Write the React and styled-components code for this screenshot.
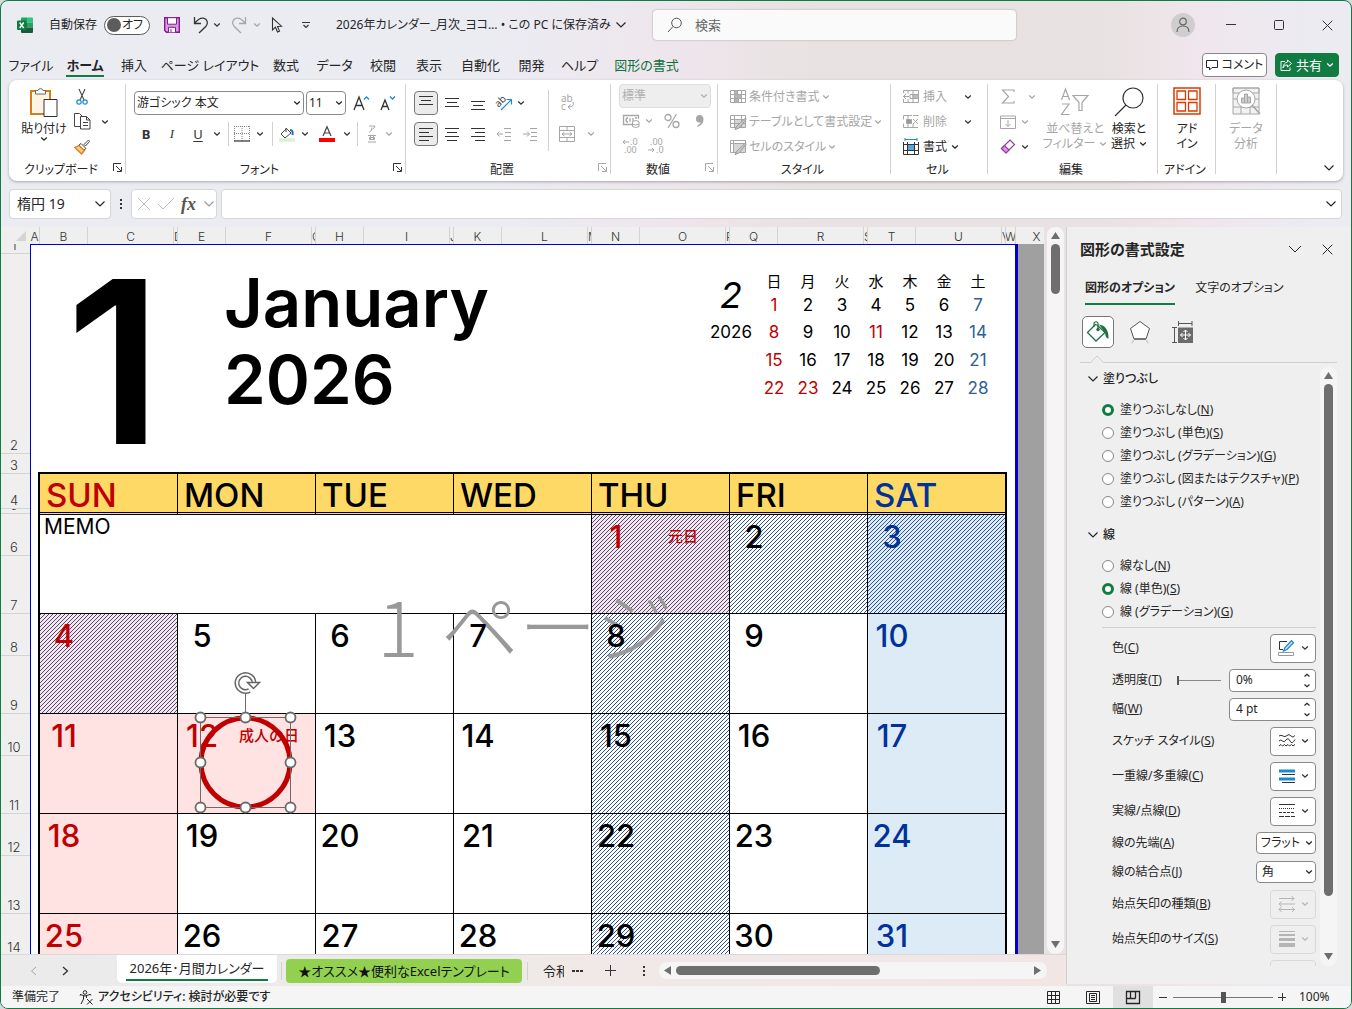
import React from "react";
import styled, { createGlobalStyle, css } from "styled-components";

const GlobalStyle = createGlobalStyle`
  * { box-sizing: border-box; }

  body {
    margin: 0;
    background: #d8d8dc;
    color: #262626;
    font-family: "Noto Sans", "Noto Sans CJK JP", sans-serif;
    font-size: 12px;
    line-height: 16px;
    font-feature-settings: "palt";
  }

  button, input, select {
    font: inherit;
    font-feature-settings: inherit;
    color: inherit;
    margin: 0;
  }

  button {
    border: 0;
    padding: 0;
    background: none;
  }
`;

/* ---------- icons ---------- */

const Svg = styled.svg`
  display: block;
  flex: none;
  overflow: visible;
`;

function Icon({ w = 16, h = 16, children, stroke = "currentColor" }) {
  return (
    <Svg width={w} height={h} viewBox={`0 0 ${w} ${h}`} fill="none" stroke={stroke} aria-hidden="true">
      {children}
    </Svg>
  );
}

const Chevron = () => <Icon w={8} h={6}><path d="M1.2 1.5L4 4.2l2.800-2.700" strokeWidth="1.300" /></Icon>;
const BigChevron = () => <Icon w={14} h={8}><path d="M1 1l6 6 6-6" /></Icon>;
const MidChevron = ({ stroke }) => <Icon w={12} h={8} stroke={stroke}><path d="M1.500 1.500L6 6l4.500-4.500" strokeWidth="1.200" /></Icon>;
const Launcher = () => (
  <Icon w={9} h={9}><path d="M.5 8V.5H8M3 3l5 5M8.500 4v4.500H4" /></Icon>
);

const ExcelLogo = () => (
  <Icon w={16} h={16} stroke="none">
    <path d="M4 1.500Q4 .5 5 .5h5v5H4z" fill="#21a366" />
    <path d="M10 .5h5q1 0 1 1v4h-6z" fill="#33c481" />
    <path d="M4 5.500h6v5H4z" fill="#107c41" />
    <path d="M10 5.500h6v5h-6z" fill="#21a366" />
    <path d="M4 10.500h12V15q0 1-1 1H5q-1 0-1-1z" fill="#185c37" />
    <rect x="0" y="3.500" width="9.500" height="9.500" rx="1" fill="#107c41" />
    <path d="M2.700 5.500l4 5.500M6.700 5.500l-4 5.500" stroke="#fff" strokeWidth="1.400" />
  </Icon>
);
const SaveIcon = () => (
  <Icon w={16} h={16} stroke="#881798">
    <path d="M.7.7h14.600v14.600H2.500L.7 13.500z" fill="#d59ddb" strokeWidth="1.400" />
    <path d="M3.500.7h9v6.500h-9z" fill="#fff" />
    <path d="M4.500 15.300v-5h7v5" fill="#fff" />
    <path d="M7 12v3" />
  </Icon>
);
const UndoIcon = () => (
  <Icon w={16} h={18}><path d="M1.500 1v6.500h6.500M1.500 7.500C5 3 8 1.800 10.500 2.200c4 .8 5 5 2.500 8L6 17" strokeWidth="1.300" /></Icon>
);
const RedoIcon = () => (
  <Icon w={16} h={18}><path d="M14.500 1v6.500H8M14.500 7.500C11 3 8 1.800 5.500 2.200c-4 .8-5 5-2.500 8L10 17" strokeWidth="1.300" /></Icon>
);
const CursorIcon = () => (
  <Icon w={12} h={16}><path d="M1.500 1v12l3-2.800 2 4.800 2-.9-2-4.600 4-.3z" strokeWidth="1.100" /></Icon>
);
const MoreIcon = () => <Icon w={8} h={8}><path d="M0 1.500h8M1.500 4L4 6.500 6.500 4" strokeWidth="1.200" /></Icon>;
const SearchIcon = () => <Icon w={16} h={16}><circle cx="9.500" cy="6" r="4.800" /><path d="M6 9.500L1 15" /></Icon>;
const PersonIcon = () => (
  <Icon w={14} h={16}><circle cx="7" cy="4.500" r="3.300" strokeWidth="1.200" /><path d="M1 15c0-4 2.500-6 6-6s6 2 6 6" strokeWidth="1.200" /></Icon>
);
const CommentIcon = () => <Icon w={12} h={12}><path d="M.5 1.500h11v7H6L3.500 11V8.500h-3z" /></Icon>;
const ShareIcon = () => (
  <Icon w={12} h={12}><path d="M5 2.500H1v9h9V8.500M7.500 1l4 3.500-4 3.500V6C5 6 4 7 3 8.800 3.300 5.500 5 3.500 7.500 3z" /></Icon>
);
const PasteIcon = () => (
  <Icon w={28} h={30}>
    <path d="M1 4h19v23H1z" fill="#fff" stroke="#e07b14" strokeWidth="2" />
    <path d="M3 6h15v19H3z" fill="#fdf3e0" stroke="none" />
    <path d="M5.500 7V3.500H8a2.600 2.600 0 015 0h2.500V7z" fill="#fff" stroke="#666" />
    <path d="M14 12.500h13v17H14z" fill="#fff" stroke="#333" />
  </Icon>
);
const CutIcon = () => (
  <Icon w={12} h={16}>
    <path d="M3 0l5 11M9 0L4 11" stroke="#444" strokeWidth="1.100" />
    <circle cx="3" cy="13" r="2.200" stroke="#1b8ad0" strokeWidth="1.200" />
    <circle cx="9" cy="13" r="2.200" stroke="#1b8ad0" strokeWidth="1.200" />
  </Icon>
);
const CopyIcon = () => (
  <Icon w={17} h={17}>
    <path d="M6 13.500H.5v-13H5.500L8 3" stroke="#444" />
    <path d="M6.500 3.500h6l3.500 3.500v9H6.500zM12.500 3.500V7H16M9 9.500h5M9 12.500h5" stroke="#444" />
  </Icon>
);
const BrushIcon = () => (
  <Icon w={16} h={16}>
    <path d="M14.500 1L10 5.500l1.500 1.500L15.500 2.500zM7 4.500l5 5-2 1.500-5-5z" stroke="#444" fill="#fff" />
    <path d="M5 6.500L.8 8.500 7.500 15l3-3.500z" fill="#f8c98a" stroke="#e07b14" strokeWidth="1.300" />
  </Icon>
);
const GrowFont = ({ down }) => (
  <Icon w={16} h={16}>
    <path d={down ? "M1 15L5 5l4 10M2.500 11.500h5" : "M1 15L6 2l5 13M2.500 10.500h7"} strokeWidth="1.300" />
    <path d={down ? "M10 1.500l2.500 2.500L15 1.500" : "M11 4.500L13.500 2 16 4.500"} stroke="#1b8ad0" strokeWidth="1.300" />
  </Icon>
);
const BorderIcon = () => (
  <Icon w={16} h={16}>
    <path d="M.5 0v15M8 0v15M15.500 0v15M0 .5h16M0 7.500h16" stroke="#888" strokeDasharray="1 1" />
    <path d="M0 15h16" stroke="#555" strokeWidth="1.300" />
  </Icon>
);
const FillIcon = () => (
  <Icon w={16} h={16}>
    <path d="M7 3L2 8l4 4 6-5-5-5V6" stroke="#444" />
    <path d="M11 4c2.500 0 3 2 2.500 5" stroke="#1b6fb5" strokeWidth="2" />
    <path d="M0 14h16" stroke="#dfeed6" strokeWidth="3.500" />
  </Icon>
);
const FontColorIcon = () => (
  <Icon w={16} h={16}>
    <path d="M4 10L8 .8l4 9.200M5.300 7h5.400" stroke="#444" strokeWidth="1.200" />
    <path d="M0 14h16" stroke="#ff0000" strokeWidth="4" />
  </Icon>
);
const PhoneticIcon = () => (
  <Icon w={10} h={18}><path d="M2 1h6q0 2-2.500 3M5 2.500q0 4-3 5M1 10.500h8M2.500 12.500h5v2h-5zM3.500 10.500v4M6.500 10.500v4M1 17h8" /></Icon>
);

/* horizontal strokes of a paragraph: [x1, x2, y] */
const Lines = ({ rows }) => (
  <Icon w={14} h={14}>
    {rows.map(([a, b, y]) => <path key={y} d={`M${a} ${y}.5H${b}`} />)}
  </Icon>
);
const AlignTop = () => <Lines rows={[[0, 14, 0], [2, 12, 4], [0, 14, 8]]} />;
const AlignMid = () => <Lines rows={[[0, 14, 2], [2, 12, 6], [0, 14, 10]]} />;
const AlignBot = () => <Lines rows={[[0, 14, 5], [2, 12, 9], [0, 14, 13]]} />;
const AlignLeft = () => <Lines rows={[[0, 14, 1], [0, 10, 5], [0, 14, 9], [0, 10, 13]]} />;
const AlignCenter = () => <Lines rows={[[0, 14, 1], [2, 12, 5], [0, 14, 9], [2, 12, 13]]} />;
const AlignRight = () => <Lines rows={[[0, 14, 1], [4, 14, 5], [0, 14, 9], [4, 14, 13]]} />;
const Indent = ({ inward }) => (
  <Icon w={14} h={14}>
    <path d="M7 1.500h7M8 5.500h6M8 9.500h6M7 13.500h7M0 7h6" />
    <path d={inward ? "M4 4.500L6.500 7 4 9.500" : "M2.500 4.500L0 7l2.500 2.500"} />
  </Icon>
);
const OrientIcon = () => (
  <Icon w={18} h={18}>
    <text x="0" y="11" transform="rotate(-45 5 8)" fontSize="10" fill="#444" stroke="none">ab</text>
    <path d="M6 16L16 6M11.500 5.500H16.500V10.500" stroke="#1b8ad0" strokeWidth="1.200" />
  </Icon>
);
const WrapIcon = () => (
  <Icon w={16} h={18}>
    <text x="1" y="8" fontSize="10" fill="currentColor" stroke="none">ab</text>
    <text x="1" y="16" fontSize="10" fill="currentColor" stroke="none">c</text>
    <path d="M13 8q2 5-5 5M10.500 10.500L8 13l2.500 2.500" />
  </Icon>
);
const MergeIcon = () => (
  <Icon w={16} h={16}><path d="M.5.5h15v15H.5zM.5 4.500h15M.5 11.500h15M8 .5v4M8 11.500v4M3 8h10M5.500 6L3 8l2.500 2M10.500 6L13 8l-2.500 2" /></Icon>
);
const CurrencyIcon = () => (
  <Icon w={17} h={14}>
    <path d="M9 10.500H.5v-9h15V5M5 4q-2 0-2 2t2 2M7 8V4M10 4v3M12 4h2" strokeWidth="1.300" />
    <path d="M9.500 7.500q3.500-2 6.500 0v5q-3 2-6.500 0zM9.500 10q3 2 6.500 0" fill="#fff" />
  </Icon>
);
const PercentIcon = () => (
  <Icon w={16} h={16}><circle cx="4" cy="4.500" r="3" strokeWidth="1.300" /><circle cx="12" cy="11.500" r="3" strokeWidth="1.300" /><path d="M12.500 1L4 15" strokeWidth="1.200" /></Icon>
);
const CommaIcon = () => (
  <Icon w={9} h={14} stroke="none"><path d="M4.500 1q4 0 4 4.500 0 5-6 7.500l-.3-1.200Q5.500 10 5.500 8.500 1 9 1 5t3.500-4z" fill="currentColor" /></Icon>
);
const DecimalIcon = ({ less }) => (
  <Icon w={18} h={16}>
    <text x={less ? "2" : "8"} y="7" fontSize="9" fill="currentColor" stroke="none">{less ? ".00" : ".0"}</text>
    <text x={less ? "8" : "2"} y="15" fontSize="9" fill="currentColor" stroke="none">{less ? ".0" : ".00"}</text>
    <path d={less ? "M0 12h6M4 10l2 2-2 2" : "M7 4H1M3 2L1 4l2 2"} />
  </Icon>
);
const GridBase = () => <path d="M.5 1.500h15v12H.5zM.5 5.500h15M.5 9.500h15M4.500 1.500v12M11.500 1.500v12" />;
const CondIcon = () => (
  <Icon w={17} h={15}><path d="M4.500 1.500h3v4h-3zM4.500 5.500h7v4h-7zM4.500 9.500h4v4h-4z" fill="#b5b5b5" /><GridBase /></Icon>
);
const TableIcon = () => (
  <Icon w={17} h={16}><path d="M4.500 5.500h11v8h-11z" fill="#d6d6d6" stroke="none" /><GridBase /><path d="M15.500 4L7 12l-2 3.500 4-1.500 7-8.500z" fill="#ccc" stroke="#999" /></Icon>
);
const CellStyleIcon = () => (
  <Icon w={17} h={16}><path d="M.5 1.500h15v12H.5zM.5 4.500h15M3.500 1.500v12" /><path d="M4 5h11v8H4z" fill="#d6d6d6" stroke="none" /><path d="M15.500 4L7 12l-2 3.500 4-1.500 7-8.500z" fill="#ccc" stroke="#999" /></Icon>
);
const InsertIcon = () => (
  <Icon w={16} h={15}><path d="M.5 4V1.500h15v12H.5V10M7 5.500h8.500v4H7zM5 1.500v3M10 1.500v12M5 10v3.500" /><path d="M10 5.500h5.500v4H10z" fill="#bbb" /><path d="M6 7.500H.5M3 5L.5 7.500 3 10" /></Icon>
);
const DeleteIcon = () => (
  <Icon w={16} h={15}><path d="M9 1.500H.5v4M.5 9.500v4H15M5 1.500v12M10 1.500h5.500M10 10v3.500" /><path d="M3.500 5.500h5v4h-5z" fill="#999" /><path d="M10 5l5 5M15 5l-5 5" /></Icon>
);
const FormatIcon = () => (
  <Icon w={16} h={17}>
    <path d="M.5 4v12.500h15V4M.5 6.500h15M.5 12.500h15M4.500 4v12.500M11.500 4v12.500" stroke="#333" />
    <path d="M4.500 6.500h7v6h-7z" fill="#58a7dc" stroke="#333" />
    <path d="M2 1.500h12M2 0v3M14 0v3" stroke="#1b8ad0" />
  </Icon>
);
const SumIcon = () => <Icon w={14} h={15}><path d="M13 3V1H1.500l6 6.500-6 6.500H13v-2" strokeWidth="1.200" /></Icon>;
const FillDownIcon = () => <Icon w={16} h={14}><path d="M.5 1h15v12.500H.5zM.5 3.500h15M8 5v6.500M5.500 9L8 11.500 10.500 9" /></Icon>;
const EraserIcon = () => (
  <Icon w={16} h={16} stroke="#9b3bab"><path d="M10 1l4.500 4.500L6 14 1.500 9.500z" fill="#fff" strokeWidth="1.200" /><path d="M4.500 6.500L1.500 9.500 6 14l3-3z" fill="#d59ddb" strokeWidth="1.200" /></Icon>
);
const SortIcon = () => (
  <Icon w={30} h={30}>
    <path d="M1.500 13L5.500 2l4 11M3 9.500h5M2 17h7L1.500 27.500h8" strokeWidth="1.200" />
    <path d="M13 8.500h15l-6 7v8h-3v-8l-6-7z" strokeWidth="1.200" />
  </Icon>
);
const FindIcon = () => (
  <Icon w={30} h={30} stroke="#333"><circle cx="19" cy="11" r="10" strokeWidth="1.200" /><path d="M12 18L1 29" strokeWidth="1.200" /></Icon>
);
const AddinIcon = () => (
  <Icon w={28} h={28} stroke="#d83b01">
    <path d="M1 1h26v26H1z" strokeWidth="1.500" />
    <path d="M4 4h8.500v8.500H4zM15.500 4H24v8.500h-8.500zM4 15.500h8.500V24H4zM15.500 15.500H24V24h-8.500z" strokeWidth="1.300" />
  </Icon>
);
const AnalyzeIcon = () => (
  <Icon w={28} h={28}>
    <path d="M1 1h26v26H1z" fill="#f2f2f2" />
    <path d="M1 1h26v5H1zM1 12h26M1 20h26M9 20v7M18 20v7" />
    <circle cx="14" cy="12" r="9" fill="#fff" />
    <path d="M20 18l8 9" strokeWidth="1.500" />
    <path d="M9.500 11h3v5h-3zM12.500 7h3v9h-3zM15.500 10h3v6h-3z" fill="#ccc" />
  </Icon>
);

const CloseX = ({ size = 12 }) => (
  <Icon w={size} h={size}><path d={`M.7.7l${size - 1.4} ${size - 1.4}M${size - 0.7} .7L.7 ${size - 0.7}`} /></Icon>
);

/* ---------- window ---------- */

const Window = styled.div`
  height: 100vh;
  display: flex;
  flex-direction: column;
  overflow: hidden;
  border: 1px solid #107c41;
  border-radius: 8px;
  background: linear-gradient(90deg, #ebecf2 0 36%, #eee6ed 49%, #e9e2e2 60% 82%, #f0e6ed 89%, #ecebf2 97%);
`;

const Slot = styled.button`
  flex: none;
  display: flex;
  align-items: center;
  justify-content: center;
  width: ${(p) => p.$w}px;
  height: 24px;
  color: ${(p) => (p.disabled ? "#a6a6a6" : "#333")};
  ${(p) => p.$on && css`
    border: 1px solid #777;
    border-radius: 4px;
    background: #ebebeb;
  `}
`;

const TitleBar = styled.header`
  flex: none;
  height: 48px;
  display: flex;
  align-items: center;
  padding-left: 16px;
`;

const AutoSave = styled.label`
  display: flex;
  align-items: center;
  margin-left: 16px;

  > span:first-child {
    width: 55px;
  }
`;

const Toggle = styled.span`
  width: 46px;
  height: 19px;
  display: flex;
  align-items: center;
  justify-content: space-between;
  padding: 0 6px 0 2px;
  border: 1px solid #5c5c5c;
  border-radius: 10px;
  background: #fff;

  input {
    appearance: none;
    width: 14px;
    height: 14px;
    border-radius: 50%;
    background: #5c5c5c;
  }
`;

const DocTitle = styled.button`
  width: 317px;
  flex: none;
  margin-left: 16px;
  display: flex;
  align-items: center;
  gap: 4px;
  white-space: nowrap;
`;

const SearchBox = styled.label`
  flex: 1;
  height: 30px;
  margin-right: 143px;
  display: flex;
  align-items: center;
  gap: 12px;
  padding: 0 14px;
  background: #fafafa;
  border-radius: 4px;
  box-shadow: 0 0 2px #999;
  color: #555;

  input {
    flex: 1;
    min-width: 0;
    padding: 0;
    border: 0;
    background: none;
    font-size: 13px;
    outline: 0;
  }

  input::placeholder {
    color: #666;
  }
`;

const Avatar = styled.span`
  width: 24px;
  height: 24px;
  display: flex;
  align-items: center;
  justify-content: center;
  border-radius: 50%;
  background: #d0cdce;
  color: #666;
`;

const MenuBar = styled.nav`
  flex: none;
  height: 31px;
  display: flex;
  align-items: center;
  padding: 0 12px 0 2px;
`;

const MenuTab = styled.button`
  flex: none;
  width: ${(p) => p.$w}px;
  height: 27px;
  display: flex;
  justify-content: center;
  font-size: 13px;
  white-space: nowrap;
  color: ${(p) => (p.$green ? "#0f703b" : "#262626")};
  font-weight: ${(p) => (p.$active ? 700 : 400)};

  span {
    padding: 6px 0 0;
    height: 26px;
    border-bottom: 2px solid ${(p) => (p.$active ? "#107c41" : "transparent")};
  }
`;

const PillButton = styled.button`
  height: 24px;
  width: ${(p) => p.$w}px;
  display: flex;
  align-items: center;
  justify-content: center;
  gap: 4px;
  margin-left: ${(p) => (p.$first ? "auto" : "8px")};
  border-radius: 4px;
  border: 1px solid ${(p) => (p.$primary ? "#107c41" : "#888")};
  background: ${(p) => (p.$primary ? "#107c41" : "#fff")};
  color: ${(p) => (p.$primary ? "#fff" : "#262626")};
  font-size: ${(p) => (p.$primary ? 13 : 12)}px;
`;

/* ---------- ribbon ---------- */

const Ribbon = styled.section`
  flex: none;
  height: 101px;
  margin: 0 8px;
  padding-top: 4px;
  display: flex;
  background: #fff;
  border-radius: 8px;
  box-shadow: 0 1px 3px rgba(0, 0, 0, 0.3);
`;

const GroupBox = styled.div`
  width: ${(p) => p.$w}px;
  height: 90px;
  flex: none;
  display: flex;
  flex-direction: column;
  border-right: 1px solid #d1d1d1;
`;

const GroupBody = styled.div`
  height: 76px;
  display: flex;
  padding-left: ${(p) => p.$pad}px;
`;

const GroupFoot = styled.div`
  height: 14px;
  display: flex;
  align-items: center;
  padding-right: 3px;
  color: ${(p) => (p.$dim ? "#a6a6a6" : "#333")};

  span {
    flex: 1;
    text-align: center;
    line-height: 18px;
    color: #262626;
    padding-top: 6px;
  }
`;

function Group({ w, pad = 7, label, launcher, dim, children }) {
  return (
    <GroupBox $w={w}>
      <GroupBody $pad={pad}>{children}</GroupBody>
      <GroupFoot $dim={dim}>
        <span>{label}</span>
        {launcher && <Launcher />}
      </GroupFoot>
    </GroupBox>
  );
}

const Stack = styled.div`
  display: flex;
  flex-direction: column;
  gap: ${(p) => p.$gap || 0}px;
  padding-top: ${(p) => p.$top || 0}px;
`;

const ToolRow = styled.div`
  height: ${(p) => p.$h || 25}px;
  display: flex;
  align-items: center;
`;

const ToolButton = styled.button`
  height: 25px;
  display: flex;
  align-items: center;
  gap: ${(p) => p.$gap || 2}px;
  white-space: nowrap;
  color: ${(p) => (p.disabled ? "#a6a6a6" : "#262626")};
  width: ${(p) => (p.$w ? `${p.$w}px` : "auto")};
`;

const BigButton = styled.button`
  width: ${(p) => p.$w}px;
  flex: none;
  height: 74px;
  padding-top: 3px;
  display: flex;
  flex-direction: column;
  align-items: center;
  line-height: 15px;
  white-space: nowrap;
  color: ${(p) => (p.disabled ? "#a6a6a6" : "#262626")};

  > svg:first-child {
    margin-bottom: ${(p) => p.$gap || 4}px;
  }

  span {
    display: flex;
    align-items: center;
    gap: 4px;
  }
`;

const Rule = styled.i`
  width: 1px;
  height: ${(p) => p.$h || 24}px;
  margin: 0 ${(p) => p.$m}px;
  background: #d1d1d1;
`;

const Combo = styled.div`
  flex: none;
  display: grid;
  align-items: center;
  width: ${(p) => p.$w}px;
  height: ${(p) => p.$h || 24}px;
  margin-right: ${(p) => p.$mr || 0}px;
  border: 1px solid ${(p) => (p.$dim ? "#ddd" : "#8a8a8a")};
  border-radius: 4px;
  background: ${(p) => (p.$dim ? "#eee" : "#fff")};
  color: ${(p) => (p.$dim ? "#b0b0b0" : "#262626")};

  select {
    grid-area: 1 / 1;
    width: 100%;
    height: 100%;
    appearance: none;
    border: 0;
    background: none;
    padding: 0 0 0 ${(p) => p.$pl || 2}px;
    opacity: 1;
    outline: 0;
  }

  svg {
    grid-area: 1 / 1;
    justify-self: end;
    margin-right: 2px;
    pointer-events: none;
  }
`;

function Dropdown({ id, value, label, disabled, ...size }) {
  return (
    <Combo $dim={disabled} {...size}>
      <select id={id} aria-label={label} disabled={disabled} defaultValue={value}>
        <option>{value}</option>
      </select>
      <Chevron />
    </Combo>
  );
}

const Letter = styled.span`
  font-size: 13px;
  font-weight: ${(p) => (p.$bold ? 700 : 400)};
  font-style: ${(p) => (p.$italic ? "italic" : "normal")};
  text-decoration: ${(p) => (p.$under ? "underline" : "none")};
  font-family: ${(p) => (p.$italic ? '"Liberation Serif", serif' : "inherit")};
  text-underline-offset: 2px;
`;

const CollapseButton = styled.button`
  margin: auto 8px 5px auto;
  height: 16px;
`;

function RibbonBar() {
  return (
    <Ribbon>
      <Group w={117} pad={9} label="クリップボード" launcher>
        <BigButton $w={52}>
          <PasteIcon />
          <span>貼り付け</span>
          <Chevron />
        </BigButton>
        <Stack>
          <ToolRow><Slot $w={24} aria-label="切り取り"><CutIcon /></Slot></ToolRow>
          <ToolRow>
            <Slot $w={24} aria-label="コピー"><CopyIcon /></Slot>
            <Slot $w={22} aria-label="コピーのオプション"><Chevron /></Slot>
          </ToolRow>
          <ToolRow><Slot $w={24} aria-label="書式のコピー"><BrushIcon /></Slot></ToolRow>
        </Stack>
      </Group>

      <Group w={280} pad={8} label="フォント" launcher>
        <Stack $top={7} $gap={7}>
          <ToolRow $h={24}>
            <Dropdown label="フォント" value="游ゴシック 本文" $w={170} $mr={2} />
            <Dropdown label="フォント サイズ" value="11" $w={40} />
            <Slot $w={30} aria-label="拡大"><GrowFont /></Slot>
            <Slot $w={24} aria-label="縮小"><GrowFont down /></Slot>
          </ToolRow>
          <ToolRow $h={24}>
            <Slot $w={24}><Letter $bold>B</Letter></Slot>
            <Slot $w={28}><Letter $italic>I</Letter></Slot>
            <Slot $w={24}><Letter $under>U</Letter></Slot>
            <Slot $w={14} aria-label="下線の種類"><Chevron /></Slot>
            <Rule $m={4} />
            <Slot $w={18} aria-label="罫線"><BorderIcon /></Slot>
            <Slot $w={18} aria-label="罫線の種類"><Chevron /></Slot>
            <Rule $m={3} />
            <Slot $w={22} aria-label="塗りつぶしの色"><FillIcon /></Slot>
            <Slot $w={14} aria-label="色の一覧"><Chevron /></Slot>
            <Slot $w={30} aria-label="フォントの色"><FontColorIcon /></Slot>
            <Slot $w={10} aria-label="フォント色の一覧"><Chevron /></Slot>
            <Rule $m={5} />
            <Slot $w={18} disabled aria-label="ふりがな"><PhoneticIcon /></Slot>
            <Slot $w={16} disabled aria-label="ふりがなの設定"><Chevron /></Slot>
          </ToolRow>
        </Stack>
      </Group>

      <Group w={205} pad={8} label="配置" launcher dim>
        <Stack $top={7} $gap={7}>
          <ToolRow $h={24}>
            <Slot $w={24} $on aria-label="上揃え"><AlignTop /></Slot>
            <Slot $w={28} aria-label="上下中央揃え"><AlignMid /></Slot>
            <Slot $w={24} aria-label="下揃え"><AlignBot /></Slot>
            <Slot $w={28} aria-label="方向"><OrientIcon /></Slot>
            <Slot $w={6} aria-label="方向の一覧"><Chevron /></Slot>
          </ToolRow>
          <ToolRow $h={24}>
            <Slot $w={24} $on aria-label="左揃え"><AlignLeft /></Slot>
            <Slot $w={28} aria-label="中央揃え"><AlignCenter /></Slot>
            <Slot $w={24} aria-label="右揃え"><AlignRight /></Slot>
            <Slot $w={28} disabled aria-label="インデントを減らす"><Indent /></Slot>
            <Slot $w={24} disabled aria-label="インデントを増やす"><Indent inward /></Slot>
          </ToolRow>
        </Stack>
        <Stack $top={6}><Rule $m={6} $h={61} /></Stack>
        <Stack $top={7} $gap={7}>
          <ToolRow $h={24}><Slot $w={26} disabled aria-label="折り返し"><WrapIcon /></Slot></ToolRow>
          <ToolRow $h={24}>
            <Slot $w={24} disabled aria-label="セルを結合"><MergeIcon /></Slot>
            <Slot $w={24} disabled aria-label="結合の一覧"><Chevron /></Slot>
          </ToolRow>
        </Stack>
      </Group>

      <Group w={107} pad={8} label="数値" launcher dim>
        <Stack>
          <Dropdown label="数値の書式" value="標準" disabled $w={92} />
          <ToolRow>
            <Slot $w={24} disabled aria-label="通貨"><CurrencyIcon /></Slot>
            <Slot $w={12} disabled aria-label="通貨の一覧"><Chevron /></Slot>
            <Slot $w={34} disabled aria-label="パーセント"><PercentIcon /></Slot>
            <Slot $w={20} disabled aria-label="桁区切り"><CommaIcon /></Slot>
          </ToolRow>
          <ToolRow>
            <Slot $w={24} disabled aria-label="小数点以下を増やす"><DecimalIcon /></Slot>
            <Slot $w={28} disabled aria-label="小数点以下を減らす"><DecimalIcon less /></Slot>
          </ToolRow>
        </Stack>
      </Group>

      <Group w={173} pad={12} label="スタイル">
        <Stack>
          <ToolButton disabled><CondIcon />条件付き書式<Chevron /></ToolButton>
          <ToolButton disabled><TableIcon />テーブルとして書式設定<Chevron /></ToolButton>
          <ToolButton disabled><CellStyleIcon />セルのスタイル<Chevron /></ToolButton>
        </Stack>
      </Group>

      <Group w={97} pad={12} label="セル">
        <Stack>
          <ToolRow>
            <ToolButton disabled $w={57} $gap={4}><InsertIcon />挿入</ToolButton>
            <Slot $w={15} aria-label="挿入の一覧"><Chevron /></Slot>
          </ToolRow>
          <ToolRow>
            <ToolButton disabled $w={57} $gap={4}><DeleteIcon />削除</ToolButton>
            <Slot $w={15} aria-label="削除の一覧"><Chevron /></Slot>
          </ToolRow>
          <ToolButton $gap={4}><FormatIcon />書式<Chevron /></ToolButton>
        </Stack>
      </Group>

      <Group w={170} label="編集">
        <Stack>
          <ToolRow>
            <Slot $w={26} disabled aria-label="合計"><SumIcon /></Slot>
            <Slot $w={22} disabled aria-label="合計の一覧"><Chevron /></Slot>
          </ToolRow>
          <ToolRow>
            <Slot $w={26} disabled aria-label="フィル"><FillDownIcon /></Slot>
            <Slot $w={8} disabled aria-label="フィルの一覧"><Chevron /></Slot>
          </ToolRow>
          <ToolRow>
            <Slot $w={26} aria-label="クリア"><EraserIcon /></Slot>
            <Slot $w={8} aria-label="クリアの一覧"><Chevron /></Slot>
          </ToolRow>
        </Stack>
        <BigButton $w={64} disabled>
          <SortIcon />
          <span>並べ替えと</span>
          <span>フィルター<Chevron /></span>
        </BigButton>
        <BigButton $w={44}>
          <FindIcon />
          <span>検索と</span>
          <span>選択<Chevron /></span>
        </BigButton>
      </Group>

      <Group w={58} pad={0} label="アドイン">
        <BigButton $w={58} $gap={6}>
          <AddinIcon />
          <span>アド</span>
          <span>イン</span>
        </BigButton>
      </Group>

      <Group w={61} pad={0}>
        <BigButton $w={60} disabled $gap={6}>
          <AnalyzeIcon />
          <span>データ</span>
          <span>分析</span>
        </BigButton>
      </Group>
      <CollapseButton aria-label="リボンを折りたたむ"><MidChevron /></CollapseButton>
    </Ribbon>
  );
}

/* ---------- formula bar ---------- */

const FormulaBar = styled.div`
  flex: none;
  height: 46px;
  display: flex;
  align-items: center;
  padding: 0 9px 0 8px;
`;

const Field = styled.div`
  height: 30px;
  width: ${(p) => (p.$w ? `${p.$w}px` : "auto")};
  flex: ${(p) => (p.$w ? "none" : 1)};
  display: flex;
  align-items: center;
  justify-content: space-between;
  padding: 0 ${(p) => p.$pr || 4}px 0 ${(p) => p.$pl || 7}px;
  margin-left: ${(p) => p.$ml || 0}px;
  background: #fff;
  border: 1px solid #d6d6d6;
  border-radius: 4px;

  input {
    flex: 1;
    min-width: 0;
    border: 0;
    padding: 0;
    outline: 0;
    background: none;
    font-size: 14px;
  }
`;

const Fx = styled.span`
  font: italic bold 18px "Liberation Serif", serif;
  color: #555;
`;

const Dots = styled.span`
  width: 20px;
  display: flex;
  justify-content: center;
`;

const VDots = () => (
  <Icon w={2} h={12} stroke="none"><path d="M0 1h2v2H0zM0 5h2v2H0zM0 9h2v2H0z" fill="#333" /></Icon>
);

/* ---------- sheet ---------- */

const Main = styled.main`
  flex: 1;
  min-height: 0;
  display: flex;
`;

const Work = styled.div`
  flex: 1;
  min-width: 0;
  display: flex;
  flex-direction: column;
`;

const SheetArea = styled.div`
  flex: 1;
  min-height: 0;
  display: flex;
`;

const Grid = styled.div`
  flex: 1;
  min-width: 0;
  display: grid;
  grid-template: 17px minmax(0, 1fr) / 29px minmax(0, 1fr);
  overflow: hidden;
  background: #efefef;
`;

const Corner = styled.div`
  display: flex;
  justify-content: flex-end;
  align-items: flex-end;
  padding: 0 4px 3px 0;
`;

const Heads = styled.div`
  display: flex;
  flex-direction: ${(p) => (p.$rows ? "column" : "row")};
  overflow: hidden;
  font-family: Inter, sans-serif;
  font-weight: 300;
  color: #333;
`;

const ColHead = styled.div`
  flex: none;
  width: ${(p) => p.$size}px;
  display: flex;
  justify-content: ${(p) => (p.$size < 10 ? "flex-start" : "center")};
  overflow: hidden;
  border-right: 1px solid #d4d4d4;
  line-height: 19px;
`;

const RowHead = styled.div`
  flex: none;
  height: ${(p) => p.$size}px;
  display: flex;
  align-items: flex-end;
  justify-content: center;
  overflow: hidden;
  padding-right: 3px;
  border-bottom: 1px solid #d4d4d4;
  font-size: 13px;
`;

const Canvas = styled.div`
  overflow: hidden;
  background: #a0a0a0;
`;

const Paper = styled.div`
  position: relative;
  width: 988px;
  padding: 0 8px 0 7px;
  border: 1px solid #0000c8;
  border-right-width: 3px;
  background: #fff;
  color: #000;
  font-family: Inter, "Noto Sans CJK JP", sans-serif;
  font-feature-settings: normal;
`;

const MonthHeader = styled.div`
  height: 227px;
  display: flex;
  align-items: flex-start;
  padding: 0 12px 0 28px;
`;

const MonthNumber = styled.div`
  width: 158px;
  margin-top: 34px;
  font-size: 227px;
  line-height: 165px;
  font-weight: 600;
`;

const MonthName = styled.div`
  flex: 1;
  margin-top: 19px;
  font-size: 67px;
  line-height: 77px;
  font-weight: 600;
`;

const tone = { red: "#c00000", blue: "#003399", sky: "#2f6096" };

const MiniTable = styled.table`
  width: 290px;
  margin-top: 26px;
  table-layout: fixed;
  border-spacing: 0;
  font-size: 17px;
  line-height: 20px;
  text-align: center;

  td, th {
    padding: 0;
    font-weight: 400;
  }

  col:first-child {
    width: 52px;
  }
`;

const MiniDay = styled.th`
  height: 21px;
  font-size: 15px;
`;

const MiniCell = styled.td`
  height: ${(p) => (p.$first ? 26 : 28)}px;
  color: ${(p) => tone[p.$tone] || "#000"};
`;

const MiniMonth = styled.td`
  font-size: 36px;
  font-style: italic;
`;

const Calendar = styled.table`
  width: 969px;
  table-layout: fixed;
  border: 2px solid #000;
  border-bottom: 0;
  border-spacing: 0;
`;

const DayName = styled.th`
  height: 41px;
  padding: 3px 0 0 6px;
  border-right: 1px solid #000;
  border-bottom: 3px double #000;
  background: #ffd966;
  color: ${(p) => tone[p.$tone] || "#000"};
  font-size: 33px;
  line-height: 34px;
  font-weight: 500;
  text-align: left;

  &:last-child {
    border-right: 0;
  }
`;

const fills = { pink: "#ffe3e3", sky: "#ddebf7", none: "#fff" };

const hatch = encodeURIComponent(
  '<svg xmlns="http://www.w3.org/2000/svg" width="4" height="4" shape-rendering="crispEdges">' +
  '<path fill="#305496" d="M3 0h1v1H3zM2 1h1v1H2zM1 2h1v1H1zM0 3h1v1H0z"/></svg>'
);

const Day = styled.td`
  height: ${(p) => (p.$first ? 99 : 100)}px;
  padding: 0;
  vertical-align: top;
  border-right: 1px solid #000;
  border-bottom: 1px solid #000;
  background-color: ${(p) => fills[p.$fill || "none"]};
  color: ${(p) => tone[p.$tone] || "#000"};
  ${(p) => p.$hatch && css`
    background-image: url("data:image/svg+xml,${hatch}");
    background-position: 0 ${p.$first ? 0 : 1}px;
  `}

  &:last-child {
    border-right: 0;
  }
`;

const DayTop = styled.div`
  position: relative;
  z-index: 2;
  height: 43px;
  display: grid;
  grid-template-columns: 48px 86px;
  align-items: center;
  justify-items: center;
  white-space: nowrap;
`;

const DayNumber = styled.span`
  font-size: 31px;
  line-height: 42px;
  font-weight: 500;
`;

const Holiday = styled.span`
  font-size: 15px;
  font-weight: 500;
`;

const Memo = styled.div`
  padding: 0 0 0 4px;
  font-size: 21px;
  line-height: 23px;
`;

const Watermark = styled.div`
  position: absolute;
  z-index: 1;
  left: 346px;
  top: 323px;
  display: flex;
  gap: 22px;
  color: #999;
  font-family: "Noto Sans CJK JP", sans-serif;
  font-size: 78px;
  line-height: 110px;
  font-weight: 300;
`;

const ShapeLayer = styled.svg`
  position: absolute;
  z-index: 3;
  left: 159px;
  top: 423px;
`;

const columns = [
  ["A", 10], ["B", 48], ["C", 86], ["D", 4], ["E", 48], ["F", 86], ["G", 4], ["H", 48],
  ["I", 86], ["J", 4], ["K", 48], ["L", 86], ["M", 4], ["N", 48], ["O", 86], ["P", 4],
  ["Q", 48], ["R", 86], ["S", 4], ["T", 48], ["U", 86], ["V", 4], ["W", 10], ["X", 42],
];

const rows = [
  [1, 10], [2, 200], [3, 20], [4, 35], [5, 5], [6, 42], [7, 58], [8, 42],
  [9, 58], [10, 42], [11, 58], [12, 42], [13, 58], [14, 42],
];

const miniHead = ["日", "月", "火", "水", "木", "金", "土"];
const miniRed = [1, 8, 11, 15, 22, 23];

const weeks = [
  [4, 5, 6, 7, 8, 9, 10],
  [11, 12, 13, 14, 15, 16, 17],
  [18, 19, 20, 21, 22, 23, 24],
  [25, 26, 27, 28, 29, 30, 31],
];
const holidays = { 1: "元日", 12: "成人の日" };
const closed = [1, 2, 3, 4, 8, 15, 22, 29];

function DayCell({ day, col, first }) {
  const red = col === 0 || holidays[day];
  const sat = col === 6;
  return (
    <Day
      $first={first}
      $fill={red ? "pink" : sat ? "sky" : "none"}
      $tone={red ? "red" : sat ? "blue" : null}
      $hatch={closed.includes(day)}
    >
      <DayTop>
        <DayNumber>{day}</DayNumber>
        {holidays[day] && <Holiday>{holidays[day]}</Holiday>}
      </DayTop>
    </Day>
  );
}

function MiniCalendar() {
  return (
    <MiniTable>
      <colgroup><col /><col span="7" /></colgroup>
      <thead>
        <tr>
          <MiniMonth rowSpan="2">2</MiniMonth>
          {miniHead.map((d) => <MiniDay key={d}>{d}</MiniDay>)}
        </tr>
        <tr>
          {[1, 2, 3, 4, 5, 6, 7].map((d) => (
            <MiniCell key={d} $first $tone={miniRed.includes(d) ? "red" : d === 7 ? "sky" : null}>{d}</MiniCell>
          ))}
        </tr>
      </thead>
      <tbody>
        {[8, 15, 22].map((start) => (
          <tr key={start}>
            <MiniCell>{start === 8 ? "2026" : ""}</MiniCell>
            {miniHead.map((_, i) => {
              const d = start + i;
              return (
                <MiniCell key={d} $tone={miniRed.includes(d) ? "red" : i === 6 ? "sky" : null}>{d}</MiniCell>
              );
            })}
          </tr>
        ))}
      </tbody>
    </MiniTable>
  );
}

const handles = [[10, 49], [55, 49], [100, 49], [10, 94], [100, 94], [10, 139], [55, 139], [100, 139]];

function SelectedCircle() {
  return (
    <ShapeLayer width="112" height="150" viewBox="0 0 112 150" fill="none">
      <circle cx="55.500" cy="94.500" r="44.500" stroke="#c00000" strokeWidth="5" />
      <path d="M10.500 49.500h90v90h-90zM55.500 24v25" stroke="#6b6b6b" />
      {handles.map(([x, y]) => (
        <circle key={`${x}-${y}`} cx={x + 0.5} cy={y + 0.5} r="5" fill="#fff" stroke="#6b6b6b" strokeWidth="1.800" />
      ))}
      <path d="M64 15a8.500 8.500 0 10-4.500 7.500" stroke="#666" strokeWidth="5" />
      <path d="M64 15a8.500 8.500 0 10-4.500 7.500" stroke="#fff" strokeWidth="2" />
      <path d="M57.500 14.500h12l-6 6z" fill="#fff" stroke="#666" strokeWidth="1.500" />
    </ShapeLayer>
  );
}

function Sheet() {
  return (
    <Paper>
      <MonthHeader>
        <MonthNumber>1</MonthNumber>
        <MonthName>January<br />2026</MonthName>
        <MiniCalendar />
      </MonthHeader>
      <Calendar>
        <colgroup>
          {miniHead.map((d, i) => <col key={d} width={i === 6 ? 137 : 138} />)}
        </colgroup>
        <thead>
          <tr>
            {["SUN", "MON", "TUE", "WED", "THU", "FRI", "SAT"].map((d) => (
              <DayName key={d} $tone={d === "SUN" ? "red" : d === "SAT" ? "blue" : null}>{d}</DayName>
            ))}
          </tr>
        </thead>
        <tbody>
          <tr>
            <Day colSpan="4" $first><Memo>MEMO</Memo></Day>
            {[1, 2, 3].map((d) => <DayCell key={d} day={d} col={d + 3} first />)}
          </tr>
          {weeks.map((week) => (
            <tr key={week[0]}>
              {week.map((d, i) => <DayCell key={d} day={d} col={i} />)}
            </tr>
          ))}
        </tbody>
      </Calendar>
      <Watermark><span>1</span><span>ページ</span></Watermark>
      <SelectedCircle />
    </Paper>
  );
}

/* ---------- scrollbars ---------- */

const VBar = styled.div`
  flex: none;
  width: 17px;
  margin: ${(p) => p.$m || "0"};
  padding: 5px 0;
  display: flex;
  flex-direction: column;
  align-items: center;
  border-radius: 8px;
  background: #f5f5f5;
  color: #6e6e6e;

  svg:last-child {
    margin-top: auto;
  }
`;

const HBar = styled.div`
  flex: 1;
  height: 17px;
  padding: 0 5px;
  margin-right: 19px;
  display: flex;
  align-items: center;
  border-radius: 8px;
  background: #f5f5f5;
  color: #6e6e6e;

  svg:last-child {
    margin-left: auto;
  }
`;

const Thumb = styled.div`
  flex: none;
  width: ${(p) => p.$w || 9}px;
  height: ${(p) => p.$h || 9}px;
  margin: ${(p) => (p.$w ? "0 0 0 3px" : "3px 0 0")};
  border-radius: 5px;
  background: #6e6e6e;
`;

const arrows = {
  up: "M0 7L4.500 0 9 7z",
  down: "M0 1h9L4.500 8z",
  left: "M7 0v9L0 4.500z",
  right: "M1 0l7 4.500L1 9z",
};
const Arrow = ({ dir }) => (
  <Icon w={9} h={9} stroke="none"><path d={arrows[dir]} fill="currentColor" /></Icon>
);

/* ---------- sheet tabs ---------- */

const SheetTabs = styled.div`
  flex: none;
  height: 32px;
  display: flex;
  align-items: center;
  border-top: 1px solid #d9d9d9;
  background: linear-gradient(90deg, #ebebec, #efe9e8 50%, #f2e6e5);
`;

const TabNav = styled.div`
  width: 116px;
  flex: none;
  display: flex;
  padding-left: 16px;
`;

const SheetTab = styled.button`
  flex: none;
  width: ${(p) => p.$w}px;
  white-space: nowrap;
  font-size: 13px;
  ${(p) => (p.$active ? css`
    align-self: flex-start;
    height: 28px;
    border-radius: 0 0 5px 5px;
    background: #fff;

    span {
      display: inline-block;
      padding: 3px 4px 0;
      height: 24px;
      border-bottom: 2px solid #107c41;
    }
  ` : css`
    height: 24px;
    border-radius: 4px;
    background: #92d050;
    color: #111;
  `)}
`;

const CutTab = styled.button`
  width: 21px;
  height: 24px;
  margin-left: 10px;
  overflow: hidden;
  white-space: nowrap;
  text-align: left;
  font-size: 13px;
`;

/* ---------- format pane ---------- */

const Pane = styled.aside`
  flex: none;
  width: 285px;
  margin-bottom: 2px;
  display: flex;
  flex-direction: column;
  border-left: 1px solid #cfcfcf;
  background: #efefef;
`;

const PaneTitle = styled.div`
  height: 44px;
  display: flex;
  align-items: center;
  padding: 0 18px 0 13px;

  h2 {
    flex: 1;
    margin: 0;
    font-size: 15px;
  }

  button + button {
    margin-left: 20px;
  }
`;

const PaneTabs = styled.div`
  height: 34px;
  display: flex;
  gap: 20px;
  align-items: flex-end;
  padding-left: 18px;

  button {
    height: 26px;
    border-bottom: 2px solid transparent;
    padding-bottom: 6px;
  }

  button:first-child {
    font-weight: 700;
    border-color: #107c41;
  }
`;

const PaneIcons = styled.div`
  height: 46px;
  margin-top: 11px;
  display: flex;
  gap: 10px;
  padding-left: 15px;

  button {
    width: 32px;
    height: 32px;
    display: flex;
    align-items: center;
    justify-content: center;
    border-radius: 5px;
    color: #555;
  }

  button:first-child {
    border: 1px solid #777;
    background: #fff;
  }
`;

const PaneRule = styled.div`
  height: 1px;
  margin: 0 14px 0 13px;
  background: #cfcfcf;

  svg {
    margin-left: 10px;
    position: relative;
    top: -7px;
  }
`;

const PaneScroll = styled.div`
  flex: 1;
  min-height: 0;
  display: flex;
  overflow: hidden;
  margin-bottom: 18px;
`;

const PaneBody = styled.div`
  flex: 1;
  min-width: 0;
  overflow: hidden;
  padding: 5px 4px 0 20px;
`;

const SectionTitle = styled.button`
  display: flex;
  align-items: center;
  gap: 4px;
  height: 22px;
  font-weight: 500;
`;

const Radios = styled.div`
  padding: 8px 0 11px 15px;
`;

const Radio = styled.label`
  height: 23px;
  display: flex;
  align-items: center;
  gap: 6px;
  white-space: nowrap;

  input {
    appearance: none;
    width: 12px;
    height: 12px;
    border: 1px solid #888;
    border-radius: 50%;
    background: #fff;
  }

  input:checked {
    border: 3px solid #107c41;
  }
`;

const Props = styled.div`
  margin-left: 15px;
  margin-top: -7px;
  padding: 6px 0 0 10px;
  border-top: 1px solid #cfcfcf;
  display: flex;
  flex-direction: column;
  gap: 7px;
`;

const Prop = styled.div`
  flex: none;
  height: ${(p) => p.$h || 28}px;
  display: flex;
  align-items: center;
  white-space: nowrap;

  label {
    margin-right: auto;
  }
`;

const PickButton = styled.button`
  width: 46px;
  height: 29px;
  display: flex;
  align-items: center;
  justify-content: center;
  gap: 5px;
  border: 1px solid ${(p) => (p.disabled ? "#d9d9d9" : "#8a8a8a")};
  border-radius: 4px;
  background: ${(p) => (p.disabled ? "#efefef" : "#fff")};
  color: ${(p) => (p.disabled ? "#b5b5b5" : "#333")};
`;

const Spin = styled.div`
  width: 87px;
  height: 23px;
  display: flex;
  align-items: center;
  padding: 0 4px 0 6px;
  border: 1px solid #8a8a8a;
  border-radius: 4px;
  background: #fff;

  input {
    flex: 1;
    min-width: 0;
    padding: 0;
    border: 0;
    outline: 0;
  }
`;

const Slider = styled.input`
  appearance: none;
  width: 44px;
  height: 10px;
  margin-right: 8px;
  background: linear-gradient(#888, #888) center / 100% 1px no-repeat;

  &::-webkit-slider-thumb {
    appearance: none;
    width: 2px;
    height: 9px;
    background: #555;
  }
`;

/* label with its access key underlined */
const Key = ({ text, k }) => <span>{text}(<u>{k}</u>)</span>;

const BucketIcon = () => (
  <Icon w={24} h={22} stroke="#1e7145">
    <path d="M10 3L1.500 11.500 10 20l9-8.500-8.500-8" fill="#fff" strokeWidth="1.300" />
    <path d="M8 6V2q2-2.500 4 0v6" strokeWidth="1.200" />
    <circle cx="12" cy="8.500" r="1.300" fill="#1e7145" />
    <path d="M13 3.500c6 .5 10 6 9.500 14-1.500 0-3-1-3.500-6z" fill="#1e7145" stroke="none" />
  </Icon>
);
const PentagonIcon = () => (
  <Icon w={22} h={24}><path d="M11 1.500L20.500 8.500 17 19H5L1.500 8.500z" fill="#fff" /><path d="M5 19h12" strokeWidth="2" stroke="#777" /><path d="M4.500 20L3 23.500M17.500 20l1.500 3.500" stroke="#bbb" /></Icon>
);
const SizeIcon = () => (
  <Icon w={22} h={22}>
    <path d="M7 2.500h14M7.500 0v5M21 0v5M3.500 6.500v15M1 6.500h5M1 21.500h5" />
    <path d="M7 6.500h15V22H7z" fill="#6b6b6b" stroke="none" />
    <path d="M14.500 9v10M9.500 14h10M12.500 11l2-2 2 2M12.500 17l2 2 2-2M11.500 12l-2 2 2 2M17.500 12l2 2-2 2" stroke="#fff" />
  </Icon>
);
const PenIcon = () => (
  <Icon w={18} h={16}><path d="M9 1.500H1.500v8H5" stroke="#333" /><path d="M13.500.8l2 2L9 9.500l-3.500 1.500L7 7.500z" fill="#cfe6f7" stroke="#1b8ad0" strokeWidth="1.300" /><path d="M.5 12.500h15v3H.5z" stroke="#999" fill="#fff" /></Icon>
);
const SketchIcon = () => (
  <Icon w={18} h={14}><path d="M1 2q2-1.500 4 0t4-.5 4 .5 4-.5M1 7q2-2 3.500 0t3.500-1 4 1 5-1.500M1 12l2-1.500 1.500 1.500 2-1.500L8 12l2-1.500 1.500 1.500 2-1.500L15 12l2-1.500" /></Icon>
);
const CompoundIcon = () => (
  <Icon w={18} h={14}><path d="M1 2h16M1 10h16" stroke="#1b8ad0" strokeWidth="3" /><path d="M4 5.500h13M4 13.500h13" /></Icon>
);
const DashIcon = () => (
  <Icon w={18} h={14}><path d="M1 .5h16" /><path d="M1 4.500h16" strokeDasharray="1 1" /><path d="M1 8.500h16" strokeDasharray="3 1" /><path d="M1 12.500h16" strokeDasharray="5 1" /></Icon>
);
const ArrowKindIcon = () => (
  <Icon w={18} h={16}><path d="M1 2.500h15M13.500 0L16 2.500 13.500 5M1 8h16M3.500 5.500L1 8l2.500 2.500M1 13.500h16M3.500 11L1 13.500 3.500 16M14 11l2.500 2.500L14 16" /></Icon>
);
const ArrowSizeIcon = () => (
  <Icon w={18} h={16}><path d="M1 .5h16" /><path d="M1 4h16" strokeWidth="2" /><path d="M1 8.500h16" strokeWidth="3" /><path d="M1 14h16" strokeWidth="4" /></Icon>
);
const SpinArrows = () => (
  <Icon w={8} h={17}><path d="M1.500 4.500L4 2.200l2.500 2.300M1.500 12.500L4 14.800l2.500-2.300" strokeWidth="1.200" /></Icon>
);

const fillOptions = [
  ["塗りつぶしなし", "N"],
  ["塗りつぶし (単色)", "S"],
  ["塗りつぶし (グラデーション)", "G"],
  ["塗りつぶし (図またはテクスチャ)", "P"],
  ["塗りつぶし (パターン)", "A"],
];
const lineOptions = [["線なし", "N"], ["線 (単色)", "S"], ["線 (グラデーション)", "G"]];

function RadioGroup({ name, options, selected }) {
  return (
    <Radios>
      {options.map(([text, k], i) => (
        <Radio key={k}>
          <input type="radio" name={name} defaultChecked={i === selected} />
          <Key text={text} k={k} />
        </Radio>
      ))}
    </Radios>
  );
}

function PickRow({ id, text, k, icon, disabled }) {
  return (
    <Prop>
      <label htmlFor={id}>{text && <Key text={text} k={k} />}</label>
      <PickButton id={id} disabled={disabled}>{icon}<Chevron /></PickButton>
    </Prop>
  );
}

function FormatPane() {
  return (
    <Pane>
      <PaneTitle>
        <h2>図形の書式設定</h2>
        <button aria-label="ウィンドウのオプション"><BigChevron /></button>
        <button aria-label="閉じる"><CloseX size={11} /></button>
      </PaneTitle>
      <PaneTabs>
        <button>図形のオプション</button>
        <button>文字のオプション</button>
      </PaneTabs>
      <PaneIcons>
        <button aria-label="塗りつぶしと線"><BucketIcon /></button>
        <button aria-label="効果"><PentagonIcon /></button>
        <button aria-label="サイズとプロパティ"><SizeIcon /></button>
      </PaneIcons>
      <PaneRule>
        <Icon w={14} h={8} stroke="#cfcfcf"><path d="M0 8.500L7 1l7 7.500z" fill="#efefef" stroke="none" /><path d="M.5 7.500L7 1l6.500 6.500" /></Icon>
      </PaneRule>
      <PaneScroll>
        <PaneBody>
          <SectionTitle><MidChevron />塗りつぶし</SectionTitle>
          <RadioGroup name="fill" options={fillOptions} selected={0} />
          <SectionTitle><MidChevron />線</SectionTitle>
          <RadioGroup name="line" options={lineOptions} selected={1} />
          <Props>
            <PickRow id="color" text="色" k="C" icon={<PenIcon />} />
            <Prop $h={22}>
              <label htmlFor="alpha"><Key text="透明度" k="T" /></label>
              <Slider type="range" defaultValue="0" aria-label="透明度" />
              <Spin><input id="alpha" defaultValue="0%" /><SpinArrows /></Spin>
            </Prop>
            <Prop $h={22}>
              <label htmlFor="width"><Key text="幅" k="W" /></label>
              <Spin><input id="width" defaultValue="4 pt" /><SpinArrows /></Spin>
            </Prop>
            <PickRow id="sketch" text="スケッチ スタイル" k="S" icon={<SketchIcon />} />
            <PickRow id="compound" text="一重線/多重線" k="C" icon={<CompoundIcon />} />
            <PickRow id="dash" text="実線/点線" k="D" icon={<DashIcon />} />
            <Prop $h={22}>
              <label htmlFor="cap"><Key text="線の先端" k="A" /></label>
              <Dropdown id="cap" value="フラット" $w={60} $h={22} $pl={4} />
            </Prop>
            <Prop $h={22}>
              <label htmlFor="join"><Key text="線の結合点" k="J" /></label>
              <Dropdown id="join" value="角" $w={60} $h={22} $pl={5} />
            </Prop>
            <PickRow id="kind" text="始点矢印の種類" k="B" icon={<ArrowKindIcon />} disabled />
            <PickRow id="size" text="始点矢印のサイズ" k="S" icon={<ArrowSizeIcon />} disabled />
            <PickRow id="end" icon={<ArrowKindIcon />} disabled />
          </Props>
        </PaneBody>
        <VBar $m="4px 14px 0 0">
          <Arrow dir="up" />
          <Thumb $h={512} />
          <Arrow dir="down" />
        </VBar>
      </PaneScroll>
    </Pane>
  );
}

/* ---------- status bar ---------- */

const StatusBar = styled.footer`
  flex: none;
  height: 22px;
  display: flex;
  align-items: center;
  padding-left: 11px;
  background: #f5f5f5;
`;

const Access = styled.button`
  display: flex;
  align-items: center;
  gap: 4px;
  margin: 0 auto 0 19px;
  font-weight: 500;
`;

const ViewButton = styled.button`
  width: 40px;
  height: 22px;
  display: flex;
  align-items: center;
  justify-content: center;
  background: ${(p) => (p.$on ? "#e0e0e0" : "none")};
`;

const ZoomRange = styled.input`
  appearance: none;
  width: 100px;
  height: 12px;
  background: linear-gradient(#777, #777) center / 100% 1px no-repeat;

  &::-webkit-slider-thumb {
    appearance: none;
    width: 5px;
    height: 11px;
    background: #555;
  }
`;

const ZoomText = styled.span`
  width: 60px;
  padding-left: 8px;
`;

const menu = [
  ["ファイル", 56], ["ホーム", 52], ["挿入", 46], ["ページ レイアウト", 106], ["数式", 46], ["データ", 51],
  ["校閲", 46], ["表示", 46], ["自動化", 57], ["開発", 45], ["ヘルプ", 51], ["図形の書式", 83],
];

export default function App() {
  return (
    <Window>
      <GlobalStyle />
      <TitleBar>
        <ExcelLogo />
        <AutoSave>
          <span>自動保存</span>
          <Toggle><input type="checkbox" />オフ</Toggle>
        </AutoSave>
        <Slot $w={44} aria-label="保存"><SaveIcon /></Slot>
        <Slot $w={14} aria-label="元に戻す"><UndoIcon /></Slot>
        <Slot $w={18} aria-label="履歴"><Chevron /></Slot>
        <Slot $w={26} disabled aria-label="やり直し"><RedoIcon /></Slot>
        <Slot $w={10} disabled aria-label="やり直しの履歴"><Chevron /></Slot>
        <Slot $w={30} aria-label="タッチ/マウス"><CursorIcon /></Slot>
        <Slot $w={28} aria-label="クイック アクセス"><MoreIcon /></Slot>
        <DocTitle>2026年カレンダー_月次_ヨコ… • この PC に保存済み<MidChevron /></DocTitle>
        <SearchBox>
          <SearchIcon />
          <input type="search" placeholder="検索" aria-label="検索" />
        </SearchBox>
        <Slot $w={48} aria-label="アカウント"><Avatar><PersonIcon /></Avatar></Slot>
        <Slot $w={48} aria-label="最小化"><Icon w={10} h={10}><path d="M0 4.500h10" /></Icon></Slot>
        <Slot $w={48} aria-label="最大化"><Icon w={10} h={10}><rect x=".5" y=".5" width="9" height="9" rx="1" /></Icon></Slot>
        <Slot $w={48} aria-label="閉じる"><CloseX size={11} /></Slot>
      </TitleBar>
      <MenuBar>
        {menu.map(([text, w]) => (
          <MenuTab key={text} $w={w} $active={text === "ホーム"} $green={text === "図形の書式"}><span>{text}</span></MenuTab>
        ))}
        <PillButton $w={65} $first><CommentIcon />コメント</PillButton>
        <PillButton $w={64} $primary><ShareIcon />共有<Chevron /></PillButton>
      </MenuBar>
      <RibbonBar />
      <FormulaBar>
        <Field $w={102}>
          <input aria-label="名前ボックス" defaultValue="楕円 19" />
          <MidChevron />
        </Field>
        <Dots><VDots /></Dots>
        <Field $w={86} $pr={1} $pl={5}>
          <Icon w={14} h={14} stroke="#bbb"><path d="M1 1l12 12M13 1L1 13" /></Icon>
          <Icon w={16} h={12} stroke="#bbb"><path d="M0 6l5 5L16 0" /></Icon>
          <Fx>fx</Fx>
          <MidChevron stroke="#999" />
        </Field>
        <Field $ml={4}>
          <input aria-label="数式バー" />
          <MidChevron />
        </Field>
      </FormulaBar>
      <Main>
        <Work>
          <SheetArea>
            <Grid>
              <Corner><Icon w={10} h={10} stroke="none"><path d="M10 0v10H0z" fill="#d4d4d4" /></Icon></Corner>
              <Heads>
                {columns.map(([c, size]) => <ColHead key={c} $size={size}>{c}</ColHead>)}
              </Heads>
              <Heads $rows>
                {rows.map(([r, size]) => <RowHead key={r} $size={size}>{r}</RowHead>)}
              </Heads>
              <Canvas><Sheet /></Canvas>
            </Grid>
            <VBar $m="0 2px 0 3px">
              <Arrow dir="up" />
              <Thumb $h={50} />
              <Arrow dir="down" />
            </VBar>
          </SheetArea>
          <SheetTabs>
            <TabNav>
              <Slot $w={32} disabled aria-label="前のシート"><Icon w={7} h={10}><path d="M6 1L1.500 5 6 9" /></Icon></Slot>
              <Slot $w={32} aria-label="次のシート"><Icon w={7} h={10}><path d="M1 1l4.500 4L1 9" strokeWidth="1.300" /></Icon></Slot>
            </TabNav>
            <SheetTab $w={160} $active><span>2026年･月間カレンダー</span></SheetTab>
            <Rule $m={4} $h={18} />
            <SheetTab $w={236}>★オススメ★便利なExcelテンプレート</SheetTab>
            <Rule $m={5} $h={18} />
            <CutTab>令和</CutTab>
            <Slot $w={28} aria-label="その他のシート"><Icon w={12} h={4} stroke="none"><path d="M0 1h3v2H0zM4 1h3v2H4zM8 1h3v2H8z" fill="#333" /></Icon></Slot>
            <Slot $w={36} aria-label="新しいシート"><Icon w={11} h={11}><path d="M0 5.500h11M5.500 0v11" /></Icon></Slot>
            <Slot $w={31} aria-label="分割"><VDots /></Slot>
            <HBar>
              <Arrow dir="left" />
              <Thumb $w={204} />
              <Arrow dir="right" />
            </HBar>
          </SheetTabs>
        </Work>
        <FormatPane />
      </Main>
      <StatusBar>
        <span>準備完了</span>
        <Access>
          <Icon w={15} h={15}><circle cx="6" cy="2.500" r="1.800" /><path d="M1 4.500q5 3 10 0M4.500 6v3L2 14M7.500 6v2M2 4l-1 1.500M11 4l1 1.500M8 9l5.500 5.500M13.500 9L8 14.500" /></Icon>
          アクセシビリティ: 検討が必要です
        </Access>
        <ViewButton aria-label="標準"><Icon w={13} h={13}><path d="M.5.5h12v12H.5zM.5 4.500h12M.5 8.500h12M4.500.5v12M8.500.5v12" /></Icon></ViewButton>
        <ViewButton aria-label="ページ レイアウト"><Icon w={14} h={13}><path d="M.5.5h13v12H.5zM3.500 2.500h7v8h-7zM5 4.500h4M5 6.500h4M5 8.500h4" /></Icon></ViewButton>
        <ViewButton $on aria-label="改ページ プレビュー"><Icon w={14} h={13}><path d="M.5.5h13v12H.5zM4.500.5v7M9.500.5v7M.5 7.500h9" strokeWidth="1.300" /></Icon></ViewButton>
        <Slot $w={20} aria-label="縮小"><Icon w={8} h={8}><path d="M0 4.500h8" /></Icon></Slot>
        <ZoomRange type="range" defaultValue="50" aria-label="ズーム" />
        <Slot $w={18} aria-label="拡大"><Icon w={8} h={8}><path d="M0 4.500h8M4.500 0v8" /></Icon></Slot>
        <ZoomText>100%</ZoomText>
      </StatusBar>
    </Window>
  );
}
